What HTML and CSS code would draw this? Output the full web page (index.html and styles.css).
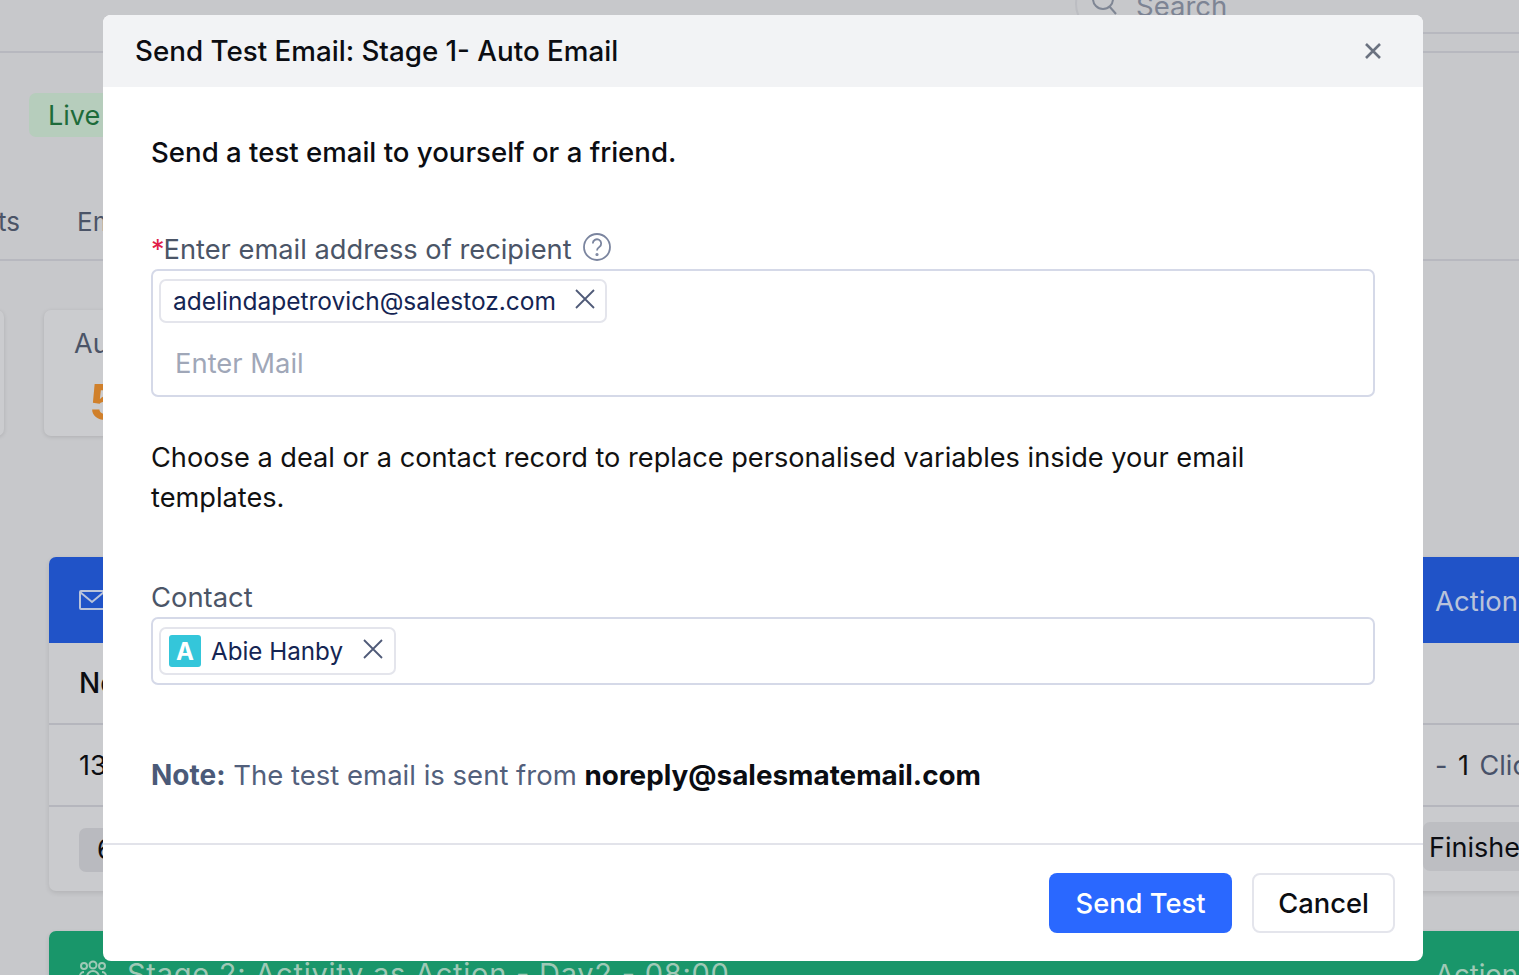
FILE: index.html
```html
<!DOCTYPE html>
<html lang="en">
<head>
<meta charset="utf-8">
<title>Send Test Email</title>
<link rel="stylesheet" href="styles.css">
</head>
<body>
<div class="page">
  <header class="topbar">
    <div class="search">
      <svg class="search-icon" viewBox="0 0 26 26" width="26" height="26" fill="none" stroke="currentColor" stroke-width="2"><circle cx="11" cy="10" r="10"/><path d="M17.500 17.500 24 25"/></svg>
      <span>Search</span>
    </div>
  </header>
  <div class="status-row"><span class="live">Live</span></div>
  <nav class="tabs"><span class="tab-a">Contacts</span><span class="tab-b">Emails</span></nav>
  <section class="stats">
    <div class="stat stat-first"></div>
    <div class="stat stat-second"><span class="stat-label">Auto</span><span class="stat-value">5</span></div>
  </section>
  <section class="stage">
    <div class="stage-head blue">
      <svg class="mail" viewBox="0 0 26 20" width="26" height="20" fill="none" stroke="currentColor" stroke-width="2"><rect x="1" y="1" width="24" height="18" rx="1"/><path d="m1 2 12 10L25 2"/></svg>
      <span class="stage-name"></span>
      <span class="stage-action">Actions</span>
    </div>
    <div class="stage-row row-head"><b>Node</b></div>
    <div class="stage-row row-data"><span>13</span><span class="right-cell">- <i>1</i> Click</span></div>
    <div class="stage-foot"><span class="chip-left">6</span><span class="chip-right">Finished</span></div>
  </section>
  <section class="stage stage-green">
    <div class="stage-head green">
      <svg class="people" viewBox="0 0 28 24" width="28" height="24" fill="none" stroke="currentColor" stroke-width="2"><circle cx="14" cy="5" r="3.500"/><circle cx="5" cy="6" r="3"/><circle cx="23" cy="6" r="3"/><path d="M8 22v-5a6 6 0 0 1 12 0v5M1 19v-3a4 4 0 0 1 4-4M27 19v-3a4 4 0 0 0-4-4"/></svg>
      <span class="stage-name">Stage 2: Activity as Action - Day2 - 08:00</span>
      <span class="stage-action">Actions</span>
    </div>
  </section>
</div>

<div class="modal" role="dialog">
  <div class="modal-head">
    <h2>Send Test Email: Stage 1- Auto Email</h2>
    <svg class="close" viewBox="0 0 16 16" width="16" height="16" fill="none" stroke="currentColor" stroke-width="2.600"><path d="M1 1l14 14M15 1 1 15"/></svg>
  </div>
  <div class="modal-body">
    <p class="lead">Send a test email to yourself or a friend.</p>
    <label class="label label-mail"><span class="req">*</span>Enter email address of recipient
      <svg class="help" viewBox="0 0 28 28" width="28" height="28" fill="none" stroke="currentColor" stroke-width="1.800"><circle cx="14" cy="14" r="13"/><path d="M9.800 10.500a4.200 4.200 0 1 1 6.500 3.500c-1.500 1-2.300 1.700-2.300 3.500"/><circle cx="14" cy="21.500" r=".7"/></svg>
    </label>
    <div class="field field-mail">
      <span class="tag tag-mail">adelindapetrovich@salestoz.com
        <svg class="tag-x" viewBox="0 0 20 20" width="20" height="20" fill="none" stroke="currentColor" stroke-width="1.800"><path d="M1 1l18 18M19 1 1 19"/></svg>
      </span>
      <span class="placeholder">Enter Mail</span>
    </div>
    <p class="choose">Choose a deal or a contact record to replace personalised variables inside your email templates.</p>
    <label class="label label-contact">Contact</label>
    <div class="field field-contact">
      <span class="tag tag-contact"><span class="avatar">A</span>Abie Hanby
        <svg class="tag-x" viewBox="0 0 20 20" width="20" height="20" fill="none" stroke="currentColor" stroke-width="1.800"><path d="M1 1l18 18M19 1 1 19"/></svg>
      </span>
    </div>
    <p class="note"><b>Note:</b> The test email is sent from <strong>noreply@salesmatemail.com</strong></p>
  </div>
  <div class="modal-foot">
    <button class="btn btn-primary">Send Test</button>
    <button class="btn btn-plain">Cancel</button>
  </div>
</div>
</body>
</html>
```
FILE: styles.css
```css
* { box-sizing: border-box; }
html, body { margin: 0; height: 100%; overflow: hidden; }
body {
  font-family: Inter, "Liberation Sans", sans-serif;
  background: #c7c8cb;
  color: #0b0d12;
  position: relative;
}

/* page behind the dialog */
.page { width: 1519px; height: 975px; overflow: hidden; }
.topbar {
  height: 53px;
  border-bottom: 2px solid #b7b8bf;
  display: flex;
  justify-content: flex-end;
  align-items: flex-end;
}
.search {
  width: 444px;
  height: 60px;
  margin-bottom: 17px;
  border: 2px solid #bcbdc2;
  border-right: 0;
  border-bottom-color: #b7b8bf;
  border-radius: 30px 0 0 30px;
  display: flex;
  align-items: flex-end;
  gap: 18px;
  padding: 0 0 11px 15px;
  font-size: 27.500px;
  line-height: 30px;
  color: #7d8494;
  flex: none;
}
.search-icon { color: #7f8694; flex: none; margin-bottom: 6px; }
.status-row { height: 85px; padding: 40px 0 0 29px; }
.live {
  display: inline-block;
  width: 90px;
  height: 44px;
  line-height: 46px;
  padding-left: 19px;
  background: #b6cdbc;
  color: #1d6b3a;
  border-radius: 7px;
  font-size: 27px;
}
.tabs {
  height: 123px;
  padding-top: 68px;
  border-bottom: 2px solid #b7b8bf;
  display: flex;
  gap: 57px;
  margin-left: -90px;
  font-size: 26px;
  line-height: 32px;
  color: #4b5467;
  white-space: nowrap;
}
.tabs span { flex: none; }
.stats { display: flex; gap: 40px; margin: 49px 0 0 -96px; height: 126px; }
.stat { width: 100px; background: #cbcccf; border-radius: 7px; box-shadow: 0 1px 4px rgba(0,0,0,.12); }
.stat-second { width: 300px; padding: 17px 0 0 30px; display: flex; flex-direction: column; }
.stat-label { font-size: 27px; line-height: 34px; color: #4b5467; }
.stat-value { font-size: 50px; line-height: 58px; font-weight: 700; color: #d0802b; margin: 12px 0 0 15px; }

.stage {
  width: 1560px;
  margin: 121px 0 0 49px;
  background: #cacbce;
  border-radius: 7px;
  height: 334px;
  box-shadow: 0 2px 5px rgba(0,0,0,.1);
  display: flex;
  flex-direction: column;
}
.stage-green { margin-top: 40px; height: 100px; }
.stage-head {
  height: 86px;
  flex: none;
  border-radius: 7px 7px 0 0;
  display: flex;
  align-items: center;
  padding: 0 0 0 30px;
  font-size: 27.500px;
  color: #b9c3da;
  white-space: nowrap;
}
.blue { background: #2053c8; }
.blue .stage-action { margin-top: 2px; }
.green { background: #19966a; color: #9fc9b6; align-items: flex-start; padding-top: 24px; }
.green .stage-name { line-height: 32px; margin: 3px 0 0 20px; font-size: 29px; letter-spacing: .75px; }
.green .stage-action { margin-top: 3px; }
.stage-action { margin-left: auto; width: 174px; line-height: 32px; }
.people { flex: none; margin-top: 5px; }
.stage-row {
  height: 82px;
  flex: none;
  border-bottom: 2px solid #b5b6bd;
  padding-left: 30px;
  display: flex;
  align-items: center;
  font-size: 27px;
  justify-content: space-between;
}
.row-head b { font-weight: 500; font-size: 28px; }
.right-cell { width: 174px; color: #485269; }
.right-cell i { font-style: normal; color: #111; margin: 0 3px; }
.stage-foot {
  flex: 1;
  display: flex;
  justify-content: space-between;
  align-items: flex-start;
  padding: 15px 0 0 30px;
  font-size: 27px;
}
.chip-left {
  width: 100px;
  height: 44px;
  line-height: 44px;
  padding-left: 18px;
  margin-top: 6px;
  background: #b9babf;
  border-radius: 7px;
}
.chip-right {
  width: 186px;
  height: 49px;
  line-height: 51px;
  padding-left: 6px;
  background: #bdbec2;
  border-radius: 7px 0 0 7px;
}

/* dialog */
.modal {
  position: absolute;
  left: 103px;
  top: 15px;
  width: 1320px;
  height: 946px;
  background: #fff;
  border-radius: 8px;
  overflow: hidden;
  display: flex;
  flex-direction: column;
}
.modal-head {
  height: 72px;
  flex: none;
  background: #f2f3f5;
  display: flex;
  align-items: center;
  justify-content: space-between;
  padding: 0 42px 0 32px;
}
.modal-head h2 { margin: 0; font-size: 27.750px; font-weight: 500; line-height: 34px; color: #0b0d12; }
.close { color: #6b7280; }
.modal-body { flex: 1; padding: 0 48px; }
.modal-body p { margin: 0; font-size: 27.190px; line-height: 40px; }
.modal-body .lead { padding-top: 45px; font-size: 27.600px; font-weight: 500; color: #0b0d12; }
.label {
  display: flex;
  align-items: center;
  font-size: 27.270px;
  line-height: 34px;
  color: #4b5567;
}
.label-mail { margin-top: 60px; height: 35px; }
.req { color: #e11d48; font-size: 27px; margin-right: -1px; }
.help { margin-left: 11px; margin-top: -5px; color: #7b859f; flex: none; }
.field {
  border: 2px solid #d5d9e8;
  border-radius: 7px;
  padding: 8px 6px;
  display: flex;
  flex-direction: column;
  align-items: flex-start;
}
.field-mail { height: 128px; margin-top: 2px; }
.field-contact { height: 68px; margin-top: 2px; }
.tag {
  display: inline-flex;
  align-items: center;
  border: 2px solid #e4e5ec;
  border-radius: 7px;
  color: #152553;
  font-size: 24.500px;
  white-space: nowrap;
}
.tag-mail { height: 44px; padding: 0 10px 0 12px; }
.tag-x { color: #4f5a78; margin-left: 19px; margin-top: -4px; flex: none; }
.tag-contact { height: 48px; padding: 0 11px 0 8px; font-size: 24.200px; }
.tag-contact .tag-x { margin-left: 20px; }
.avatar {
  width: 32px;
  height: 32px;
  margin-right: 10px;
  background: #34c6da;
  color: #fff;
  font-weight: 700;
  border-radius: 3px;
  display: flex;
  align-items: center;
  justify-content: center;
  font-size: 24px;
}
.placeholder { margin: 23px 0 0 16px; font-size: 27.400px; line-height: 34px; color: #a0a7b8; }
.modal-body .choose { padding-top: 41px; color: #111; }
.label-contact { margin-top: 60px; height: 37px; font-size: 27.400px; }
.modal-body .note { padding-top: 70px; color: #52607c; font-size: 27.500px; }
.note b { font-weight: 700; color: #4b5a78; font-size: 28px; }
.note strong { font-weight: 700; color: #0b0d12; font-size: 27.850px; }
.modal-foot {
  height: 118px;
  flex: none;
  border-top: 2px solid #e2e3ea;
  display: flex;
  justify-content: flex-end;
  gap: 20px;
  padding: 28px 28px 0 0;
}
.btn {
  height: 60px;
  border-radius: 8px;
  font: 500 27.300px Inter, "Liberation Sans", sans-serif;
  padding: 0;
}
.btn-primary { width: 183px; background: #2a68ff; border: 0; color: #fff; }
.btn-plain { width: 143px; background: #fff; border: 2px solid #e4e5ec; color: #0b0d12; }
```
